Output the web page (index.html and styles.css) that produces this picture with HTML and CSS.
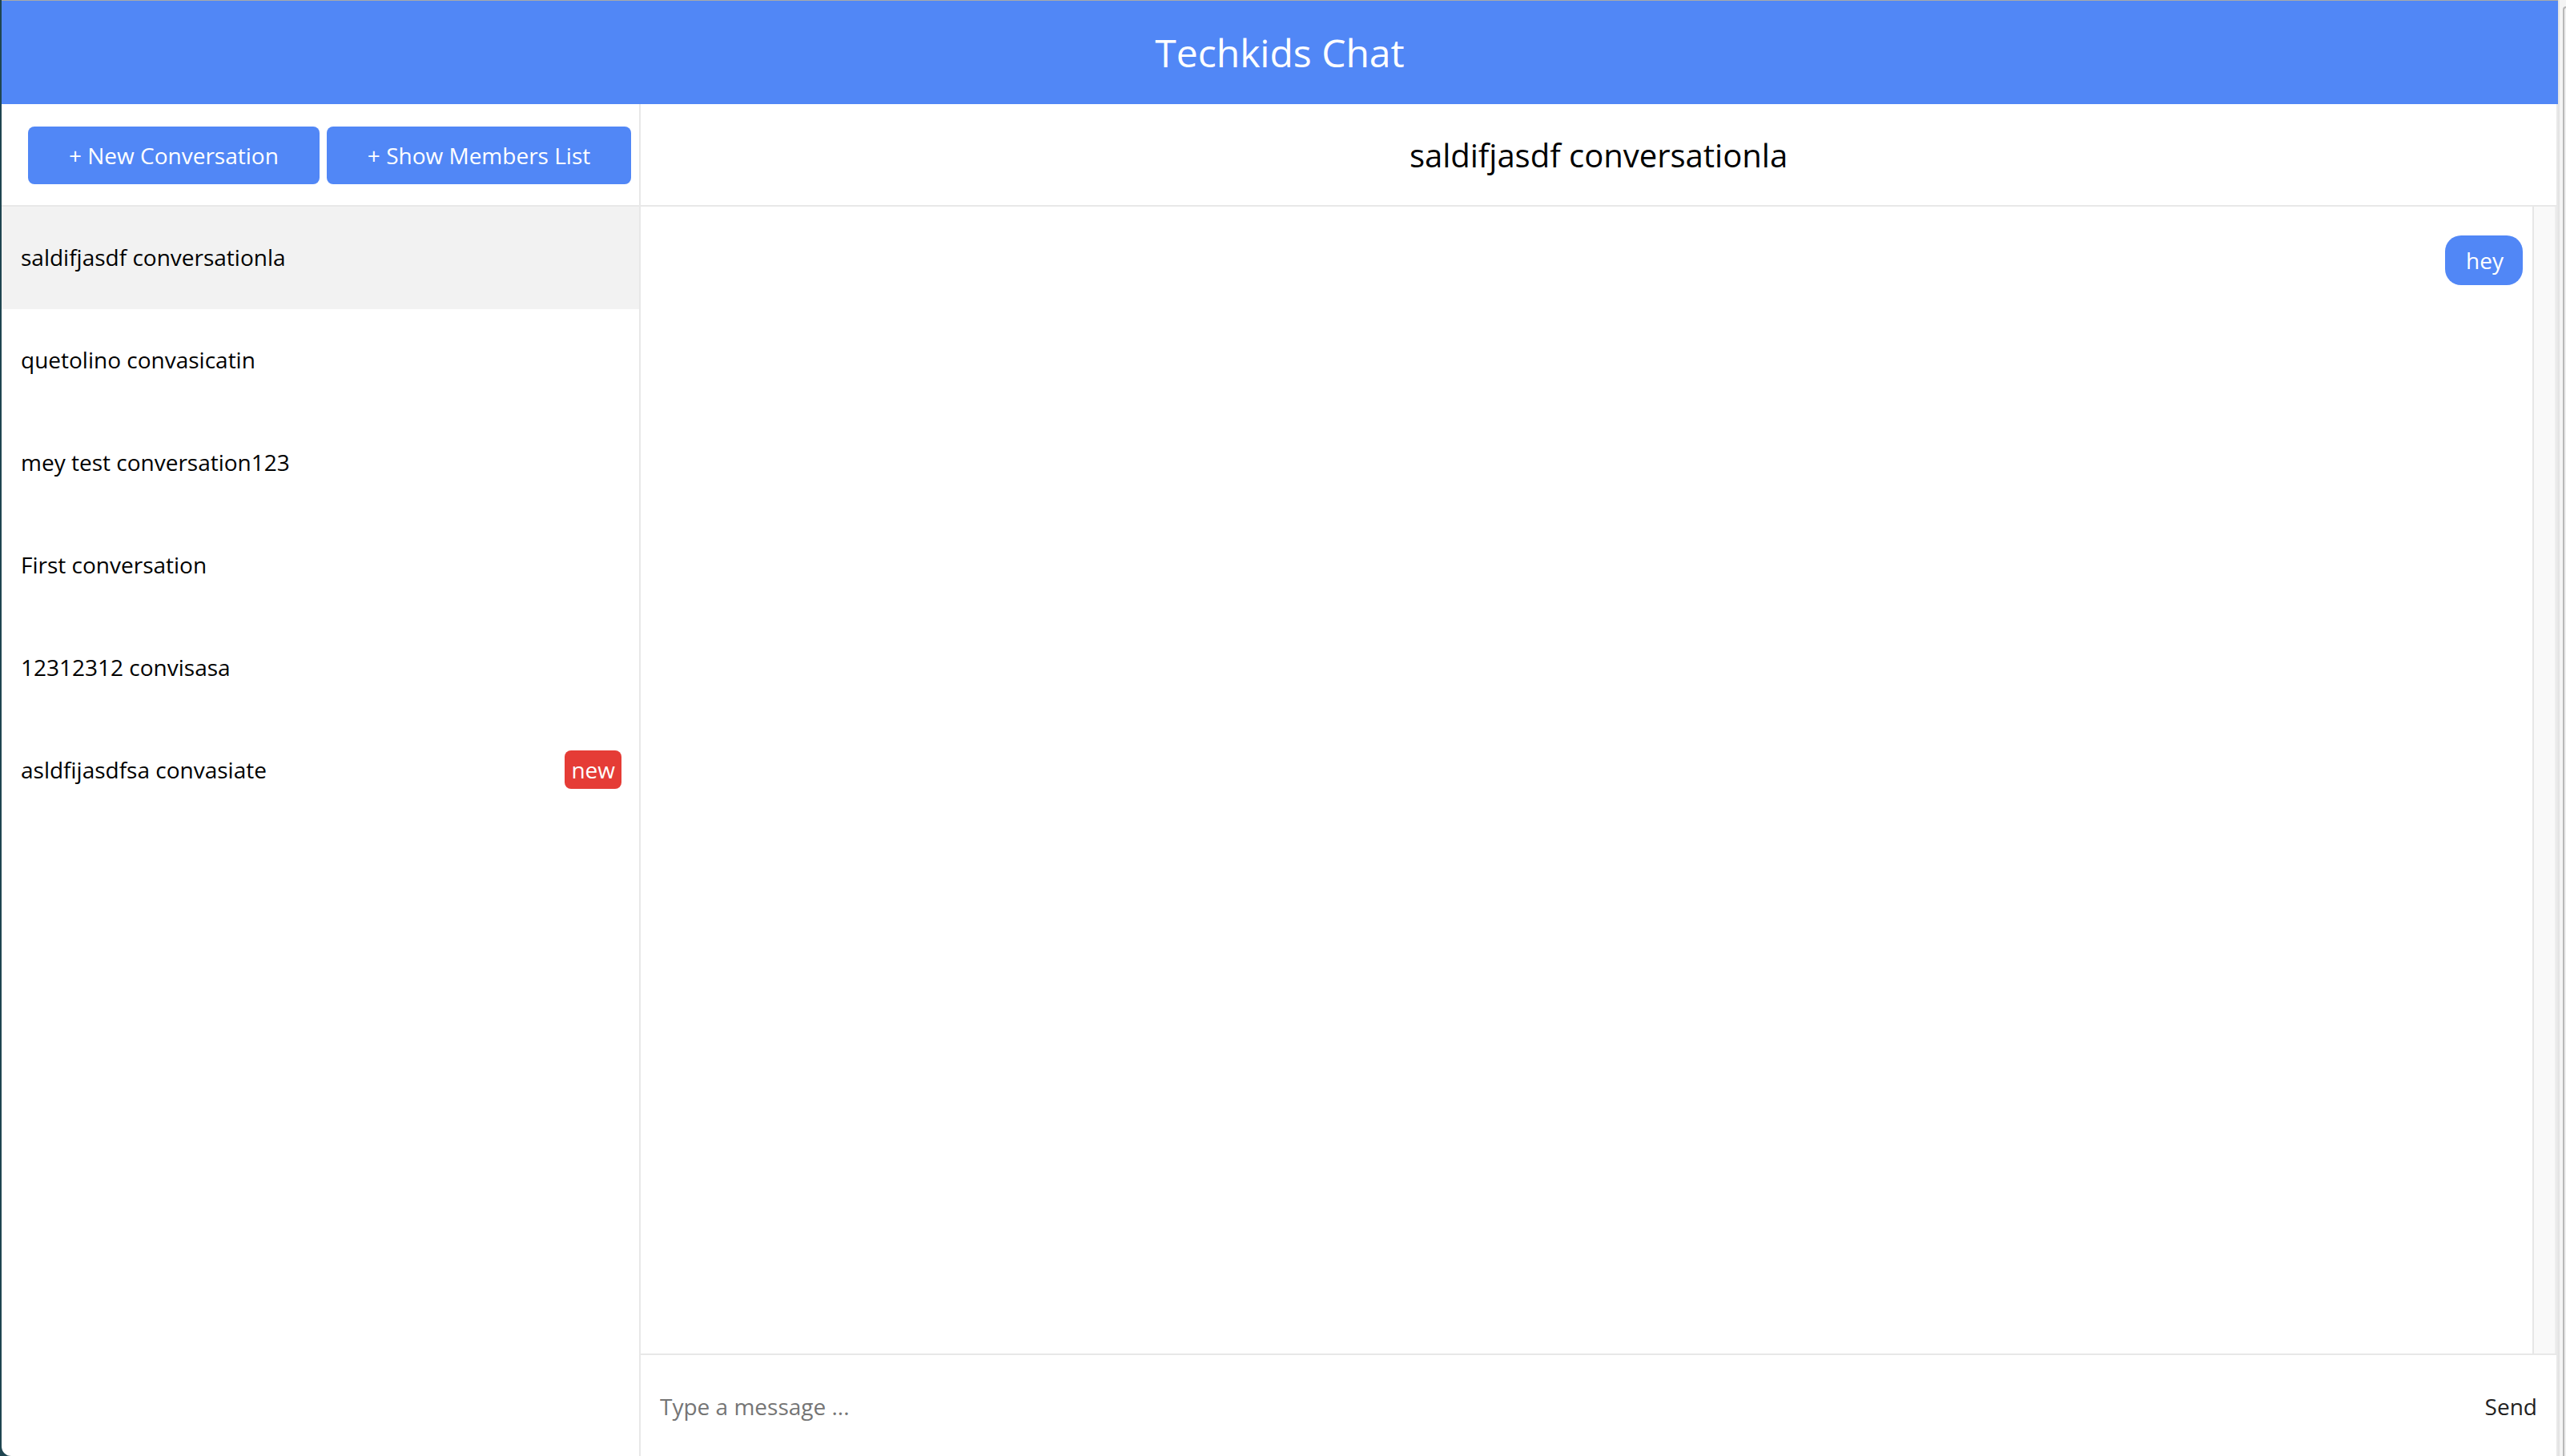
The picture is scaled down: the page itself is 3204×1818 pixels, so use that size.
FILE: index.html
```html
<!DOCTYPE html>
<html lang="en">
<head>
<meta charset="utf-8">
<title>Techkids Chat</title>
<link rel="stylesheet" href="styles.css">
</head>
<body>
  <div class="window">
    <header class="app-header">Techkids Chat</header>
    <div class="app-body">
      <aside class="sidebar">
        <div class="sidebar-actions">
          <button class="btn">+ New Conversation</button>
          <button class="btn">+ Show Members List</button>
        </div>
        <ul class="conv-list">
          <li class="conv-item active"><span>saldifjasdf conversationla</span></li>
          <li class="conv-item"><span>quetolino convasicatin</span></li>
          <li class="conv-item"><span>mey test conversation123</span></li>
          <li class="conv-item"><span>First conversation</span></li>
          <li class="conv-item"><span>12312312 convisasa</span></li>
          <li class="conv-item"><span>asldfijasdfsa convasiate</span><span class="badge">new</span></li>
        </ul>
      </aside>
      <main class="chat">
        <div class="chat-header">saldifjasdf conversationla</div>
        <div class="chat-body">
          <div class="messages">
            <div class="msg mine"><span class="bubble">hey</span></div>
          </div>
          <div class="track"></div>
        </div>
        <form class="composer">
          <input class="composer-input" type="text" placeholder="Type a message ...">
          <button class="send" type="button">Send</button>
        </form>
      </main>
    </div>
  </div>
  <div class="outer-scroll"><div class="outer-thumb"></div></div>
</body>
</html>
```
FILE: styles.css
```css
* { box-sizing: border-box; }

html, body {
  margin: 0;
  height: 1818px;
}

body {
  display: flex;
  overflow: hidden;
  background: #1f4550;
  padding-left: 2px;
  font-family: "Open Sans", "Noto Sans", sans-serif;
  color: #000;
}

.window {
  width: 3192px;
  height: 1818px;
  display: flex;
  flex-direction: column;
  background: #fff;
  border-top: 1px solid #a9a9a9;
  border-bottom-left-radius: 12px;
  overflow: hidden;
}

.app-header {
  height: 129px;
  flex: 0 0 129px;
  background: #5187f6;
  color: #fff;
  font-size: 48px;
  display: flex;
  align-items: center;
  justify-content: center;
}

.app-body {
  flex: 1;
  display: flex;
  min-height: 0;
}

.sidebar {
  width: 798px;
  flex: 0 0 798px;
  border-right: 2px solid #e8e8e8;
  display: flex;
  flex-direction: column;
}

.sidebar-actions {
  height: 128px;
  flex: 0 0 128px;
  border-bottom: 2px solid #e8e8e8;
  display: flex;
  align-items: center;
  gap: 9px;
  padding-left: 33px;
  padding-top: 2px;
}

.btn {
  height: 72px;
  padding: 0 51px;
  border: none;
  border-radius: 8px;
  background: #5187f6;
  color: #fff;
  font-family: "Open Sans", "Noto Sans", sans-serif;
  font-size: 28px;
}

.conv-list {
  list-style: none;
  margin: 0;
  padding: 0;
}

.conv-item {
  height: 128px;
  display: flex;
  align-items: center;
  justify-content: space-between;
  padding: 0 22px 2px 24px;
  font-size: 28px;
}

.conv-item.active {
  background: #f2f2f2;
}

.badge {
  background: #e53c36;
  color: #fff;
  border-radius: 8px;
  padding: 4px 8px;
  line-height: 40px;
  font-size: 28px;
}

.chat {
  flex: 1;
  display: flex;
  flex-direction: column;
  border-right: 2px solid #e8e8e8;
  min-width: 0;
}

.chat-header {
  height: 128px;
  flex: 0 0 128px;
  border-bottom: 2px solid #e8e8e8;
  display: flex;
  align-items: center;
  justify-content: center;
  font-size: 40px;
}

.chat-body {
  flex: 1;
  display: flex;
  min-height: 0;
}

.messages {
  flex: 1;
  padding: 36px 12px 0 0;
}

.msg {
  display: flex;
}

.msg.mine {
  justify-content: flex-end;
}

.bubble {
  background: #5187f6;
  color: #fff;
  font-size: 28px;
  line-height: 38px;
  padding: 12px 24px 12px 26px;
  border-radius: 20px;
}

.track {
  width: 30px;
  flex: 0 0 30px;
  background: #f9f9f9;
  border-left: 2px solid #e6e6e6;
  border-right: 2px solid #ededed;
}

.composer {
  height: 128px;
  flex: 0 0 128px;
  margin: 0;
  border-top: 2px solid #e8e8e8;
  display: flex;
  align-items: center;
  padding: 2px 24px 0 24px;
}

.composer-input {
  flex: 1;
  border: none;
  outline: none;
  background: transparent;
  font-family: "Open Sans", "Noto Sans", sans-serif;
  font-size: 28px;
  padding: 0;
  color: #222;
}

.composer-input::placeholder {
  color: #757575;
}

.send {
  border: none;
  background: transparent;
  font-family: "Open Sans", "Noto Sans", sans-serif;
  font-size: 28px;
  color: #222;
  padding: 0;
}

.outer-scroll {
  flex: 1;
  background: #f4f4f4;
  border-left: 2px solid #e4e4e4;
  padding-top: 8px;
  padding-left: 4px;
}

.outer-thumb {
  height: 100%;
  border-left: 2px solid #b8b8b8;
  border-top: 2px solid #b8b8b8;
  border-top-left-radius: 6px;
  background: #efefef;
}
```
